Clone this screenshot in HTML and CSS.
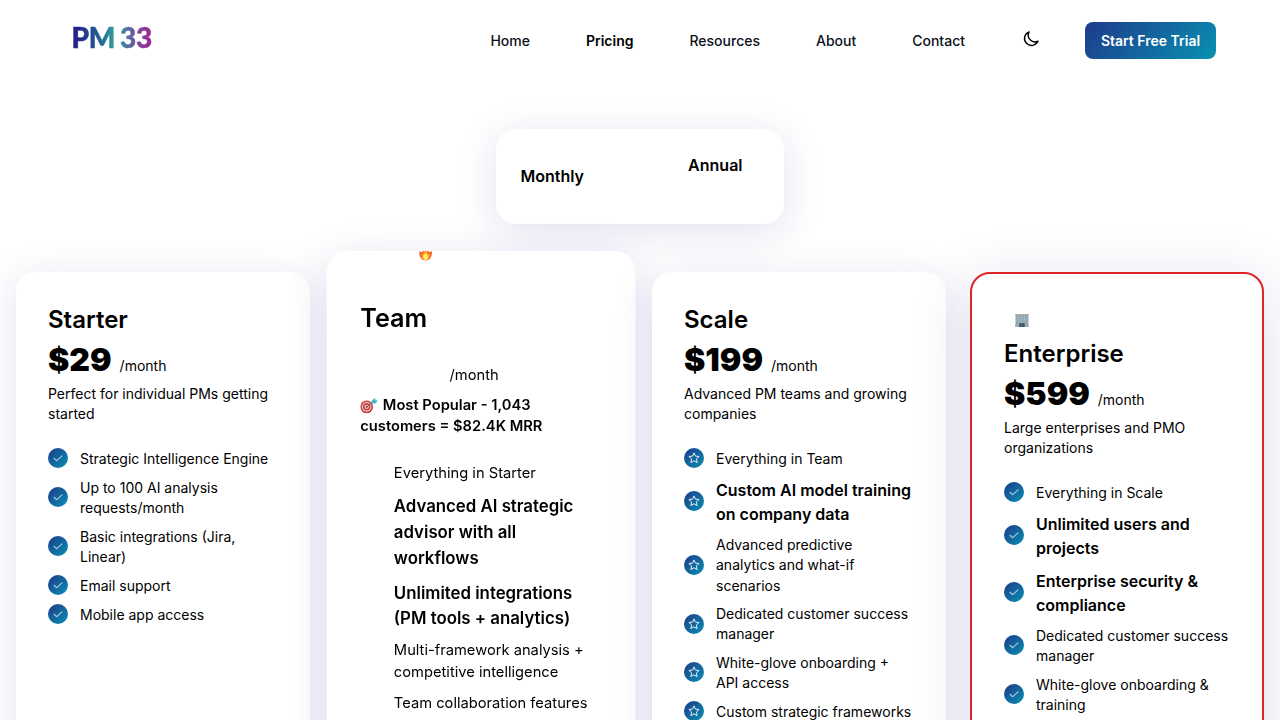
FILE: index.html
```html
<!DOCTYPE html>
<html lang="en">
<head>
<meta charset="utf-8">
<title>PM33 Pricing</title>
<link rel="stylesheet" href="styles.css">
</head>
<body>
<svg class="defs" aria-hidden="true">
  <symbol id="check" viewBox="0 0 12 12"><path d="M2 6.3 4.8 8.7 10 3.8" fill="none" stroke="#a9c9e2" stroke-width="1.15" stroke-linecap="round" stroke-linejoin="round"/></symbol>
  <symbol id="star" viewBox="0 0 12 12"><path d="M6 .9 7.45 4.1 11.1 4.5 8.4 6.9 9.15 10.6 6 8.8 2.85 10.6 3.6 6.9 .9 4.5 4.55 4.1Z" fill="none" stroke="#e4f0f7" stroke-width="1" stroke-linejoin="round"/></symbol>
</svg>
<header class="header">
  <div class="logo">PM<span class="logo-num">33</span></div>
  <nav class="nav">
    <a>Home</a><a class="active">Pricing</a><a>Resources</a><a>About</a><a>Contact</a>
  </nav>
  <svg class="moon" viewBox="0 0 16 16"><path d="M6.1.9A7 7 0 1 0 15 10.1 6.7 6.7 0 0 1 6.1.9Z" fill="none" stroke="#000" stroke-width="1.4" stroke-linejoin="round"/></svg>
  <a class="cta">Start Free Trial</a>
</header>
<main>
  <div class="toggle"><span class="monthly">Monthly</span><span class="annual">Annual</span></div>
  <div class="plans">
    <section class="card">
      <h2>Starter</h2>
      <div class="price"><strong>$29</strong><span>/month</span></div>
      <p class="desc">Perfect for individual PMs getting started</p>
      <ul>
        <li><i><svg><use href="#check"/></svg></i><span>Strategic Intelligence Engine</span></li>
        <li><i><svg><use href="#check"/></svg></i><span>Up to 100 AI analysis requests/month</span></li>
        <li><i><svg><use href="#check"/></svg></i><span>Basic integrations (Jira, Linear)</span></li>
        <li><i><svg><use href="#check"/></svg></i><span>Email support</span></li>
        <li><i><svg><use href="#check"/></svg></i><span>Mobile app access</span></li>
      </ul>
    </section>
    <section class="card team">
      <svg class="fire" viewBox="0 0 13 10"><path d="M.3 0C-.2 5.5 2.4 9.5 6.5 9.5S13.200 5.500 12.700 0L10.500 1.600 9.200 0H4L2.600 1.600Z" fill="#f4522d"/><path d="M2.200 2.400C1.800 6 3.300 9.100 6.500 9.100S11.200 6 10.800 2.400L9.500 3.300 8.300 0H4.800L3.600 3.400Z" fill="#ffa51f"/><path d="M6.500 2C4.600 4 3.900 5.300 4.200 6.800 4.500 8.300 5.300 8.900 6.500 8.900S8.600 8.300 8.900 6.800C9.100 5.300 8.300 4 6.500 2Z" fill="#fff06a"/></svg>
      <h2>Team</h2>
      <div class="price"><span>/month</span></div>
      <p class="desc"><svg class="dart" viewBox="0 0 18 16"><circle cx="6.500" cy="9" r="6.500" fill="#c9403d"/><circle cx="6.500" cy="9" r="4.900" fill="#f0d8d5"/><circle cx="6.500" cy="9" r="3.800" fill="#ca4140"/><circle cx="6.500" cy="9" r="2.200" fill="#f0d8d5"/><circle cx="6.500" cy="9" r="1.100" fill="#b9302f"/><path d="M6.500 9 13 4" stroke="#596b70" stroke-width="1"/><path d="M11.300 5.500 11.700 2.600 15.200 0 15.400 2.300 18 2.900 15 5.700Z" fill="#42b9c6"/></svg> Most Popular - 1,043 customers = $82.4K MRR</p>
      <ul>
        <li><span>Everything in Starter</span></li>
        <li><b>Advanced AI strategic advisor with all workflows</b></li>
        <li><b>Unlimited integrations (PM tools + analytics)</b></li>
        <li><span>Multi-framework analysis + competitive intelligence</span></li>
        <li><span>Team collaboration features</span></li>
      </ul>
    </section>
    <section class="card">
      <h2>Scale</h2>
      <div class="price"><strong>$199</strong><span>/month</span></div>
      <p class="desc">Advanced PM teams and growing companies</p>
      <ul>
        <li><i><svg><use href="#star"/></svg></i><span>Everything in Team</span></li>
        <li><i><svg><use href="#star"/></svg></i><b>Custom AI model training on company data</b></li>
        <li><i><svg><use href="#star"/></svg></i><span>Advanced predictive analytics and what-if scenarios</span></li>
        <li><i><svg><use href="#star"/></svg></i><span>Dedicated customer success manager</span></li>
        <li><i><svg><use href="#star"/></svg></i><span>White-glove onboarding + API access</span></li>
        <li><i><svg><use href="#star"/></svg></i><span>Custom strategic frameworks</span></li>
      </ul>
    </section>
    <section class="card enterprise">
      <div class="building"><svg viewBox="0 0 14 13"><path d="M.5 0H13.500V13H.5Z" fill="#8fa6b1"/><path d="M0 0H14V1H0Z" fill="#b1b0a8"/><path d="M.5 3.500H13.500M.5 5.500H13.500M.5 7.500H13.500M3.500 1V10M6.500 1V9M9.500 1V10" stroke="#a9bdc5" stroke-width=".5"/><path d="M.5 10H4.500V13H.5ZM9.500 10H13.500V13H9.500Z" fill="#a1aaae"/><path d="M4.300 9.200H9.700V13H4.300Z" fill="#3b5565"/><path d="M7 10V13" stroke="#7594a4" stroke-width=".5"/></svg></div>
      <h2>Enterprise</h2>
      <div class="price"><strong>$599</strong><span>/month</span></div>
      <p class="desc">Large enterprises and PMO organizations</p>
      <ul>
        <li><i><svg><use href="#check"/></svg></i><span>Everything in Scale</span></li>
        <li><i><svg><use href="#check"/></svg></i><b>Unlimited users and projects</b></li>
        <li><i><svg><use href="#check"/></svg></i><b>Enterprise security &amp; compliance</b></li>
        <li><i><svg><use href="#check"/></svg></i><span>Dedicated customer success manager</span></li>
        <li><i><svg><use href="#check"/></svg></i><span>White-glove onboarding &amp; training</span></li>
      </ul>
    </section>
  </div>
</main>
</body>
</html>
```
FILE: styles.css
```css
* { box-sizing: border-box; }
html, body { height: 720px; overflow: hidden; }
body { margin: 0; background: #fff; color: #000; font-family: Inter, sans-serif; font-size: 14px; }
h2, p, ul { margin: 0; padding: 0; }
.defs { display: none; }
.header { height: 81px; padding: 0 64px 0 71.5px; display: flex; align-items: center; }
.logo { font: 900 28px/30px Lato, sans-serif; letter-spacing: -.3px; width: 83px; margin-top: -8px; display: flex; gap: 5px; white-space: nowrap; background: linear-gradient(90deg, #24248a 8%, #246f99 38%, #38a29b 52%, #4d73a5 65%, #7c469b 80%, #a51f91 98%); -webkit-background-clip: text; background-clip: text; color: transparent; -webkit-text-stroke: .5px transparent; }
.nav { margin-left: auto; display: flex; gap: 56px; font-weight: 500; color: #0b1020; }
.nav .active { font-weight: 600; color: #000; }
.moon { width: 16px; height: 16px; margin: -4px 46px 0 58px; }
.cta { height: 37px; width: 131px; border-radius: 8px; background: linear-gradient(135deg, #1e3a8a, #0891b2); color: #fff; font-weight: 600; display: flex; align-items: center; justify-content: center; }
.toggle { width: 288px; height: 95px; margin: 48px auto; padding: 0 23.5px 2px 24.5px; border-radius: 20px; box-shadow: 0 8px 40px rgba(30, 27, 140, .13); display: flex; align-items: center; font-size: 16px; font-weight: 600; }
.annual { margin: -22px 18px 0 auto; }
.plans { padding: 0 16px; display: grid; grid-template-columns: repeat(4, 294px); gap: 24px; }
.card { position: relative; height: 840px; padding: 32px; border-radius: 20px; background: #fff; box-shadow: 0 8px 40px rgba(30, 27, 140, .13); }
.card h2 { font-size: 24px; font-weight: 600; line-height: 32px; }
.price { display: flex; align-items: baseline; gap: 8px; height: 48px; line-height: 48px; }
.price strong { font-size: 32px; font-weight: 900; }
.desc { line-height: 20.3px; margin-bottom: 24.1px; }
.card ul { list-style: none; display: grid; gap: 8px; }
.card li { display: flex; align-items: center; gap: 12px; min-height: 21px; line-height: 20.4px; }
.card li b { font-size: 16px; font-weight: 600; line-height: 24.5px; }
.card i { flex: none; width: 20px; height: 20px; margin-top: -1.6px; border-radius: 50%; background: linear-gradient(135deg, #1e3a8a, #0891b2); display: flex; align-items: center; justify-content: center; }
.card i svg { width: 12px; height: 12px; }
.team { transform: scale(1.05); overflow: hidden; padding-top: 48px; }
.team .price { padding-left: 85px; margin-top: 14px; height: 42.2px; }
.team .desc { font-weight: 600; line-height: 20px; margin-bottom: 24.9px; }
.team ul { padding-left: 32px; gap: 8.6px; }
.fire { position: absolute; left: 88px; top: 0; width: 12.5px; height: 9.5px; }
.dart { width: 17px; height: 15px; margin: 0 1.5px -4px -.5px; }
.enterprise { border: 2px solid #dc2626; padding: 30px 32px; box-shadow: 0 12px 60px rgba(30, 27, 140, .15); }
.building { height: 34px; padding: 10px 0 0 11px; }
.building svg { display: block; width: 14px; height: 13px; }
```
